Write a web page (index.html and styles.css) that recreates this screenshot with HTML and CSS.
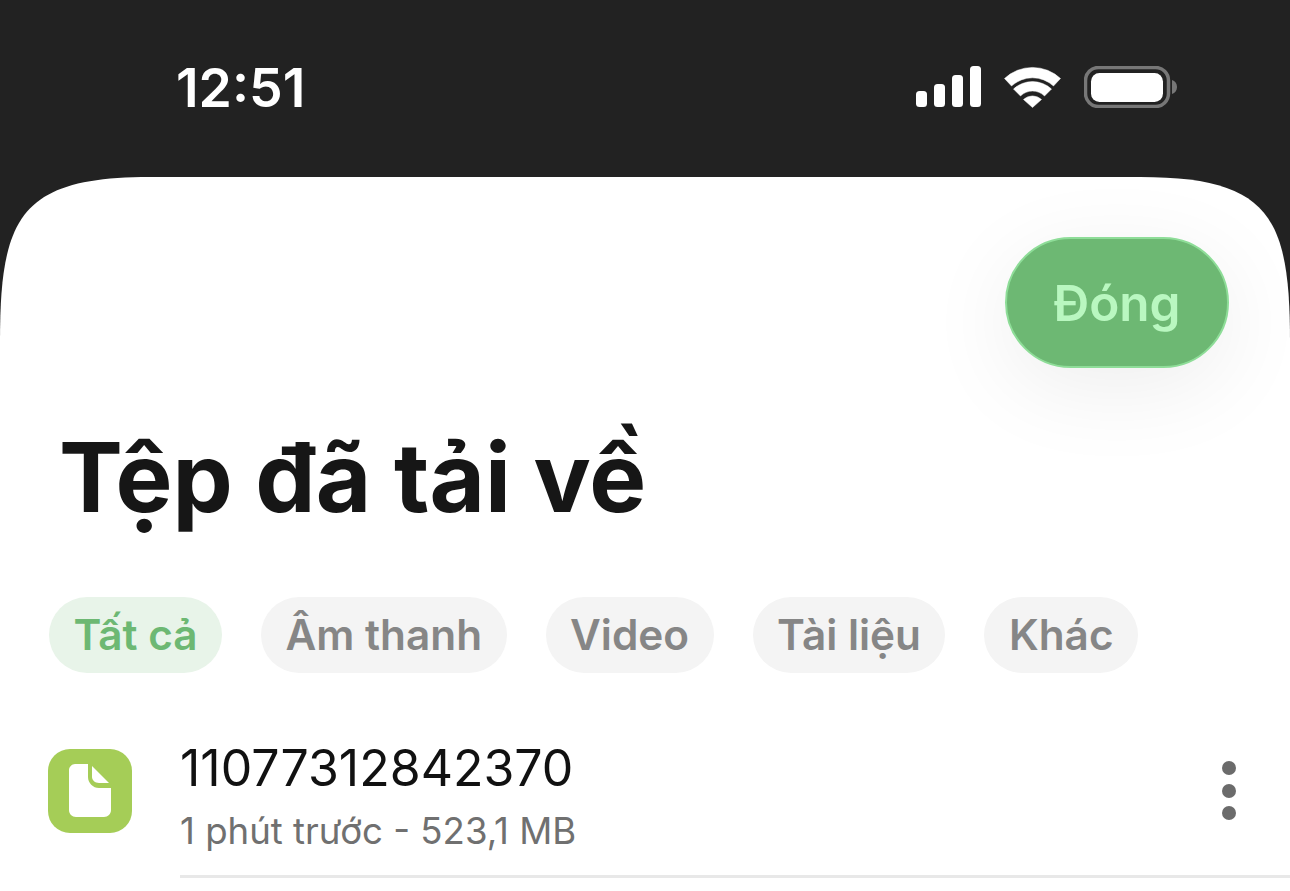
FILE: index.html
```html
<!DOCTYPE html>
<html lang="vi">
<head>
  <meta charset="UTF-8">
  <meta name="viewport" content="width=device-width, initial-scale=1.0">
  <title>Tệp đã tải về</title>
  <link rel="stylesheet" href="styles.css">
</head>
<body>
  <!-- Status bar -->
  <div class="status-bar">
    <span class="time">12:51</span>
    <div class="status-icons">
      <svg class="signal" width="65" height="42" viewBox="0 0 65 42">
        <rect x="0" y="25" width="11" height="16" rx="3.5" fill="#fff"/>
        <rect x="18" y="18" width="11" height="23" rx="3.5" fill="#fff"/>
        <rect x="36" y="9" width="11" height="32" rx="3.5" fill="#fff"/>
        <rect x="54" y="0" width="11" height="41" rx="3.5" fill="#fff"/>
      </svg>
      <svg class="wifi" width="57" height="42" viewBox="0 0 57 42">
        <path d="M0.500 12.500A41 41 0 0 1 56.500 12.500L49.500 20A31 31 0 0 0 7.500 20Z" fill="#fff" stroke="#fff" stroke-width="0.500" stroke-linejoin="round"/>
        <path d="M9.500 23A28 28 0 0 1 47.500 23L40.500 30A17 17 0 0 0 16.500 30Z" fill="#fff" stroke="#fff" stroke-width="0.500" stroke-linejoin="round"/>
        <path d="M19.500 33.500A13 13 0 0 1 37.500 33.500L28.500 41.500Z" fill="#fff" stroke="#fff" stroke-width="0.500" stroke-linejoin="round"/>
      </svg>
      <svg class="battery" width="93" height="42" viewBox="0 0 93 42">
        <rect x="1.500" y="1.500" width="83" height="39" rx="13" fill="none" stroke="#777" stroke-width="3.500"/>
        <rect x="7" y="7" width="72" height="29" rx="8.500" fill="#fff"/>
        <path d="M88 14C91 15 93 17.500 93 21C93 24.500 91 27 88 28Z" fill="#777"/>
      </svg>
    </div>
  </div>

  <div class="sheet">
    <div class="sheet-top">
      <button class="close-btn">Đóng</button>
    </div>

    <h1>Tệp đã tải về</h1>

    <div class="chips">
      <span class="chip chip-active">Tất cả</span>
      <span class="chip">Âm thanh</span>
      <span class="chip">Video</span>
      <span class="chip">Tài liệu</span>
      <span class="chip">Khác</span>
    </div>

    <div class="file-row">
      <div class="file-icon">
        <svg width="42" height="54" viewBox="0 0 42 54">
          <path d="M6 0H19V13C19 19 24 24 30 24H42V46C42 50 39 53 35 53H7C3 53 0 50 0 46V6C0 3 3 0 6 0Z" fill="#fff"/>
          <path d="M23 2L40 19H30C26 19 23 16 23 13Z" fill="#fff"/>
        </svg>
      </div>
      <div class="file-body">
        <div class="file-info">
          <div class="file-name">11077312842370</div>
          <div class="file-meta">1 phút trước - 523,1 MB</div>
        </div>
        <div class="more">
          <span class="dot"></span>
          <span class="dot"></span>
          <span class="dot"></span>
        </div>
      </div>
    </div>
  </div>
</body>
</html>
```

FILE: styles.css
```css
* {
  box-sizing: border-box;
}

html, body {
  height: 100%;
}

body {
  font-family: Inter, "Noto Sans", sans-serif;
  background-color: #222;
  margin: 0;
  overflow: hidden;
  display: flex;
  flex-direction: column;
}

.status-bar {
  height: 177px;
  flex-shrink: 0;
  padding: 58px 113px 0 176px;
  display: flex;
  justify-content: space-between;
  align-items: flex-start;
  color: #fff;
}

.time {
  font-size: 53.500px;
  font-weight: 600;
  line-height: 60px;
}

.status-icons {
  display: flex;
  gap: 23px;
  padding-top: 8px;
}

.sheet {
  flex: 1;
  background-color: #fff;
  clip-path: path("M0 165C0 40 20 0 150 0L1140 0C1270 0 1290 40 1290 165L1290 714L0 714Z");
  padding-top: 60px;
}

.sheet-top {
  display: flex;
  justify-content: flex-end;
  padding-right: 61px;
}

.close-btn {
  width: 224px;
  height: 131px;
  border: 2px solid #8edd98;
  border-radius: 66px;
  background-color: #6db873;
  color: #b9f7c0;
  font-family: inherit;
  font-size: 49.500px;
  font-weight: 600;
  box-shadow: 0 20px 90px rgba(0, 0, 0, 0.07);
  cursor: pointer;
}

h1 {
  margin: 44px 0 0 59px;
  color: #161616;
  font-size: 95.700px;
  font-weight: 700;
  line-height: 130px;
}

.chips {
  display: flex;
  gap: 39px;
  margin-top: 55px;
  padding-left: 49px;
}

.chip {
  height: 76px;
  padding: 0 24.500px;
  border-radius: 38px;
  background-color: #f4f4f4;
  color: #868686;
  font-size: 42.300px;
  font-weight: 600;
  line-height: 76px;
}

.chip-active {
  background-color: #e8f4e9;
  color: #6db873;
}

.file-row {
  display: flex;
  gap: 48px;
  margin-top: 76px;
  padding-left: 48px;
}

.file-icon {
  width: 84px;
  height: 84px;
  flex-shrink: 0;
  border-radius: 22px;
  background-color: #a5cd57;
  display: flex;
  justify-content: center;
  align-items: center;
}

.file-body {
  flex: 1;
  display: flex;
  justify-content: space-between;
  height: 129px;
  border-bottom: 3px solid #e8e8e8;
  padding-right: 54px;
}

.file-name {
  margin-top: -10px;
  color: #111;
  font-size: 50px;
  line-height: 58px;
}

.file-meta {
  margin-top: 13px;
  color: #707070;
  font-size: 36.600px;
  line-height: 42px;
}

.more {
  display: flex;
  flex-direction: column;
  gap: 8.500px;
  padding-top: 12px;
}

.dot {
  width: 14px;
  height: 14px;
  border-radius: 50%;
  background-color: #6b6b6b;
}
```
